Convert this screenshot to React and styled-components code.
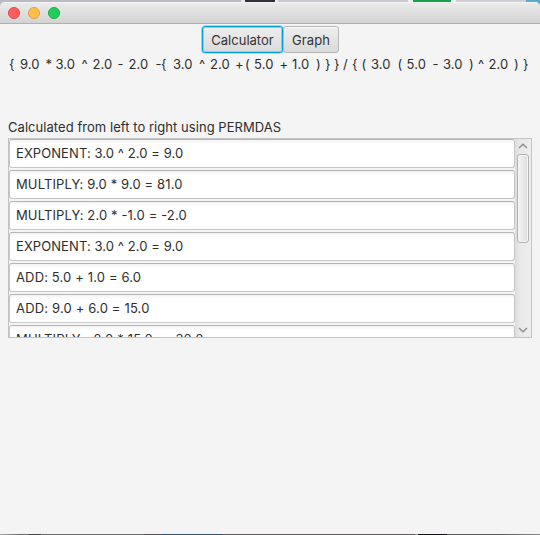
import React from 'react';
import styled, { createGlobalStyle } from 'styled-components';

const Global = createGlobalStyle`
  * { box-sizing: border-box; }
  body { margin: 0; background: #f4f4f4; overflow: hidden; }
`;

const Desktop = styled.div`
  width: 540px;
  height: 535px;
  padding: 2px 0 1px;
  font: 13px/17px Inter, "Liberation Sans", sans-serif;
  font-feature-settings: "calt" 0;
  color: #2e2e2e;
  background:
    linear-gradient(90deg, #b9bac5 0 241px, #e9e9eb 241px 245px, #30313c 245px 275px, #ececee 275px 278px, #c9c9d1 278px 408px, #eee 408px 413px, #16a34a 413px 451px, #eee 451px 456px, #cfcfd7 456px 526px, #58acd0 526px) 0 0 / 540px 8px no-repeat,
    linear-gradient(90deg, #aaa 0, #6b696b 20px 29px, #474347 29px 41px, #6d6a6d 41px 144px, #555054 144px 161px, #365266 161px 222px, #5e5a5d 222px 415px, #999 415px 418px, #151016 418px 447px, #5c595c 447px 500px, #8c898c) 0 534px / 540px 1px no-repeat;
`;

const Window = styled.main`
  display: flex;
  flex-direction: column;
  height: 532px;
  background: #f4f4f4;
  border-radius: 5px 5px 0 0;
  overflow: hidden;
`;

const TitleBar = styled.header`
  display: flex;
  flex: none;
  align-items: center;
  gap: 8px;
  height: 22px;
  padding: 0 8px;
  background: linear-gradient(#ebebeb, #d3d3d3);
  border-top: 1px solid #f4f4f4;
  border-bottom: 1px solid #b1b1b1;
`;

const Light = styled.span`
  width: 12px;
  height: 12px;
  border-radius: 50%;
  background: ${p => p.$fill};
  border: 1px solid ${p => p.$edge};
`;

const Tabs = styled.nav`
  display: flex;
  justify-content: center;
  height: 28px;
  margin-top: 2px;
  padding-left: 1px;
`;

const Tab = styled.button`
  width: ${p => p.$width}px;
  height: 27px;
  padding: 1px 0 0;
  font: inherit;
  font-feature-settings: inherit;
  letter-spacing: ${p => p.$tracking}px;
  color: #333;
  background: linear-gradient(#eeeeee, #dadada);
  border: ${p => (p.$focused ? '1px solid #039ed3' : '1px solid #b7b7b7')};
  border-radius: 3px;
  box-shadow: ${p => (p.$focused ? '0 0 0 0.6px #5cc2e5, inset 0 0 0 1px #8fd0e6' : 'inset 0 1px #fafafa')};
`;

const Expression = styled.div`
  display: flex;
  height: 20px;
  margin-top: 2px;
  padding-left: 9px;
  white-space: pre;
`;

const Token = styled.span`
  flex: none;
  width: ${p => p.$width}px;
  letter-spacing: 0.1px;
`;

const Caption = styled.div`
  height: 19px;
  margin: 43px 0 0 8px;
  letter-spacing: ${p => p.$tracking}px;
`;

const ListPane = styled.section`
  display: flex;
  width: 524px;
  height: 200px;
  margin-left: 8px;
  border: 1px solid #c3c3c3;
  overflow: hidden;
`;

const Steps = styled.div`
  display: flex;
  flex-direction: column;
  gap: 2px;
  width: 506px;
`;

const Step = styled.div`
  flex: none;
  height: 29px;
  padding: 5px 6px;
  background: linear-gradient(#f3f3f3, #fff 4px);
  border: 1px solid #c6c6c6;
  border-top-color: #b5b5b5;
  border-radius: 3px;
  letter-spacing: ${p => p.$tracking}px;
  white-space: pre;
`;

const ScrollBar = styled.div`
  display: flex;
  flex-direction: column;
  align-items: center;
  width: 16px;
  padding: 4px 0;
  background: linear-gradient(90deg, #dcdcdc, #e8e8e8 30%, #eeeeee);
`;

const Thumb = styled.div`
  width: 12px;
  height: 89px;
  margin: 5px 0 auto 0;
  border: 1px solid #b2b2b2;
  border-radius: 3px;
  background: linear-gradient(90deg, #f4f4f4, #dcdcdc);
  box-shadow: inset 0 0 0 1px #f5f5f5;
`;

const Arrow = ({ down }) => (
  <svg width="10" height="6" viewBox="0 0 10 6" fill="none">
    <path d={down ? 'M1 1L5 4.8L9 1' : 'M1 5L5 1.2L9 5'} stroke="#8c8c8c" strokeWidth="1.4" />
  </svg>
);

const tokens = [
  ['{', 11], ['9.0', 25.5], ['*', 10], ['3.0', 26], ['^', 11], ['2.0', 25],
  ['-', 11], ['2.0', 27], ['-', 5.5], ['{', 12], ['3.0', 26], ['^', 11],
  ['2.0', 25], ['+', 10], ['(', 9], ['5.0', 25.5], ['+', 12.5], ['1.0', 24],
  [')', 9], ['}', 9], ['}', 9], ['/', 9], ['{', 9.5], ['(', 9.5], ['3.0', 26.5],
  ['(', 9], ['5.0', 26], ['-', 10.5], ['3.0', 26], [')', 9], ['^', 10.5],
  ['2.0', 25.5], [')', 9], ['}', 8],
];

const steps = [
  ['EXPONENT: 3.0 ^ 2.0 = 9.0', 0.08],
  ['MULTIPLY: 9.0 * 9.0 = 81.0', 0.12],
  ['MULTIPLY: 2.0 * -1.0 = -2.0', 0.13],
  ['EXPONENT: 3.0 ^ 2.0 = 9.0', 0.08],
  ['ADD: 5.0 + 1.0 = 6.0', 0.14],
  ['ADD: 9.0 + 6.0 = 15.0', 0.17],
  ['MULTIPLY: -2.0 * 15.0 = -30.0', 0.17],
];

export default function App() {
  return (
    <Desktop>
      <Global />
      <Window>
        <TitleBar>
          <Light $fill="#ff5c5c" $edge="#e2474b" />
          <Light $fill="#ffbd4c" $edge="#dfa13b" />
          <Light $fill="#21cc5b" $edge="#17ad43" />
        </TitleBar>
        <Tabs>
          <Tab $focused $width={81} $tracking={0}>Calculator</Tab>
          <Tab $width={56} $tracking={0.1}>Graph</Tab>
        </Tabs>
        <Expression>
          {tokens.map(([text, width], i) => <Token key={i} $width={width}>{text}</Token>)}
        </Expression>
        <Caption $tracking={0.05}>Calculated from left to right using PERMDAS</Caption>
        <ListPane>
          <Steps>
            {steps.map(([text, tracking], i) => <Step key={i} $tracking={tracking}>{text}</Step>)}
          </Steps>
          <ScrollBar>
            <Arrow />
            <Thumb />
            <Arrow down />
          </ScrollBar>
        </ListPane>
      </Window>
    </Desktop>
  );
}
